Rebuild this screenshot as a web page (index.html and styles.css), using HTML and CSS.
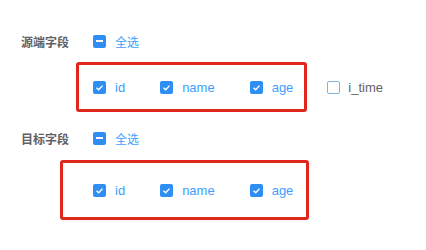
FILE: index.html
```html
<!DOCTYPE html>
<html lang="zh">
<head>
  <meta charset="UTF-8">
  <title>字段选择</title>
  <link rel="stylesheet" href="styles.css">
</head>
<body>
  <div class="page">
    <div class="head head-src">
      <span class="label">源端字段</span>
      <span class="cb part"></span>
      <span class="all">全选</span>
    </div>
    <div class="row">
      <div class="group group-src">
        <label class="item"><span class="cb on"><svg viewBox="0 0 13 13"><polyline points="3.5,6.8 5.7,8.8 9.5,4.6"/></svg></span><span class="txt on">id</span></label>
        <label class="item"><span class="cb on"><svg viewBox="0 0 13 13"><polyline points="3.5,6.8 5.7,8.8 9.5,4.6"/></svg></span><span class="txt on">name</span></label>
        <label class="item last"><span class="cb on"><svg viewBox="0 0 13 13"><polyline points="3.5,6.8 5.7,8.8 9.5,4.6"/></svg></span><span class="txt on">age</span></label>
      </div>
      <label class="item extra"><span class="cb off"></span><span class="txt">i_time</span></label>
    </div>

    <div class="head head-dst">
      <span class="label">目标字段</span>
      <span class="cb part"></span>
      <span class="all">全选</span>
    </div>
    <div class="row">
      <div class="group group-dst">
        <label class="item"><span class="cb on"><svg viewBox="0 0 13 13"><polyline points="3.5,6.8 5.7,8.8 9.5,4.6"/></svg></span><span class="txt on">id</span></label>
        <label class="item"><span class="cb on"><svg viewBox="0 0 13 13"><polyline points="3.5,6.8 5.7,8.8 9.5,4.6"/></svg></span><span class="txt on">name</span></label>
        <label class="item last"><span class="cb on"><svg viewBox="0 0 13 13"><polyline points="3.5,6.8 5.7,8.8 9.5,4.6"/></svg></span><span class="txt on">age</span></label>
      </div>
    </div>
  </div>
</body>
</html>
```

FILE: styles.css
```css
body {
  margin: 0;
  background: #fff;
  font-family: "Liberation Sans", Arial, "Noto Sans CJK SC", sans-serif;
  font-size: 13px;
  color: #606266;
}
.page {
  width: 426px;
  height: 250px;
  overflow: hidden;
}
.head {
  display: flex;
  align-items: center;
  height: 20px;
  padding-left: 21px;
}
.head-src {
  margin-top: 31px;
}
.head-dst {
  margin-top: 16px;
}
.label {
  width: 72px;
  font-size: 12px;
  font-weight: bold;
  color: #5f6166;
}
.all {
  margin-left: 9px;
  color: #409eff;
  font-size: 12px;
}
.row {
  display: flex;
  align-items: center;
}
.group {
  display: flex;
  align-items: center;
  border: 3px solid #e0271c;
  border-radius: 3px;
}
.group-src {
  margin: 11px 0 0 76px;
  height: 44px;
  padding: 0 11px 0 14px;
}
.group-dst {
  margin: 12px 0 0 60px;
  height: 54px;
  padding: 0 13px 0 30px;
}
.item {
  display: flex;
  align-items: center;
  margin-right: 35px;
}
.item.last {
  margin-right: 0;
}
.extra {
  margin: 11px 0 0 20px;
}
.extra .txt {
  margin-left: 8px;
}
.cb {
  box-sizing: border-box;
  width: 13px;
  height: 13px;
  border-radius: 2px;
  display: inline-flex;
  align-items: center;
  justify-content: center;
  flex: none;
}
.cb svg {
  width: 13px;
  height: 13px;
}
.cb polyline {
  fill: none;
  stroke: #fff;
  stroke-width: 1.4;
}
.cb.on {
  background: #2f8ef4;
}
.cb.part {
  background: #2f8ef4;
}
.cb.part::after {
  content: "";
  width: 7px;
  height: 2px;
  background: #fff;
}
.cb.off {
  border: 1px solid #7fb4e0;
  background: #fff;
}
.txt {
  margin-left: 9px;
  color: #606266;
}
.txt.on {
  color: #409eff;
}
```
